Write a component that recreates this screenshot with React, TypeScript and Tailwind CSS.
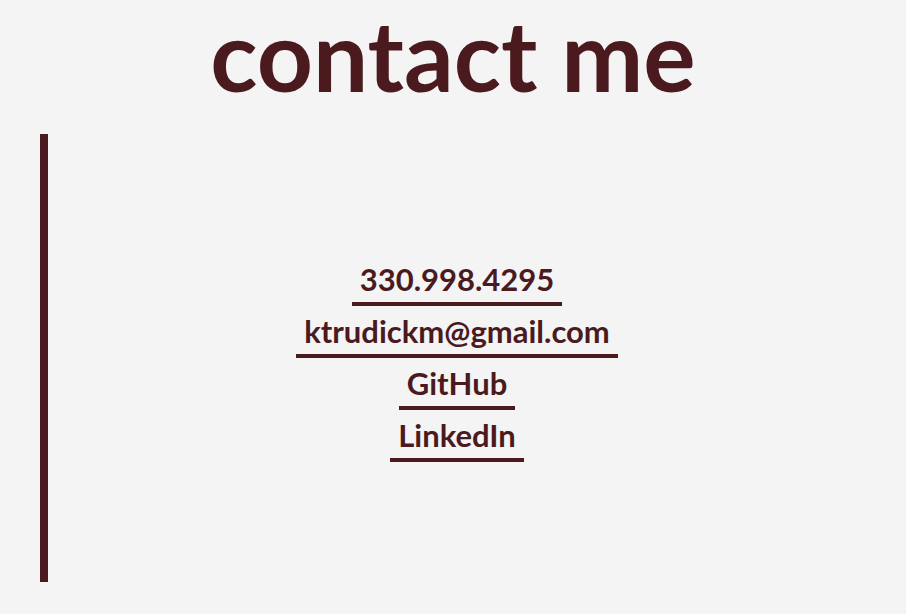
const links = [
  { label: '330.998.4295', href: 'tel:3309984295' },
  { label: 'ktrudickm@gmail.com', href: 'mailto:ktrudickm@gmail.com' },
  { label: 'GitHub', href: '#' },
  { label: 'LinkedIn', href: '#' },
];

const App: React.FC = () => {
  return (
    <div
      className="min-h-[614px] bg-[#f4f4f4] text-[#4a1a1e]"
      style={{ fontFamily: 'Lato, "Noto Sans", sans-serif' }}
    >
      <h1 className="text-center text-[98px] font-bold leading-[108px]">
        contact me
      </h1>
      <section className="mx-10 mt-[26px] h-[448px] pt-[20px] border-l-8 border-[#4a1a1e] flex flex-col items-center justify-center">
        {links.map((link) => (
          <a
            key={link.label}
            href={link.href}
            className="px-2 pb-2 mb-[10px] border-b-4 border-[#4a1a1e] text-[31px] font-bold leading-[30px]"
          >
            {link.label}
          </a>
        ))}
      </section>
    </div>
  );
};

export default App;
